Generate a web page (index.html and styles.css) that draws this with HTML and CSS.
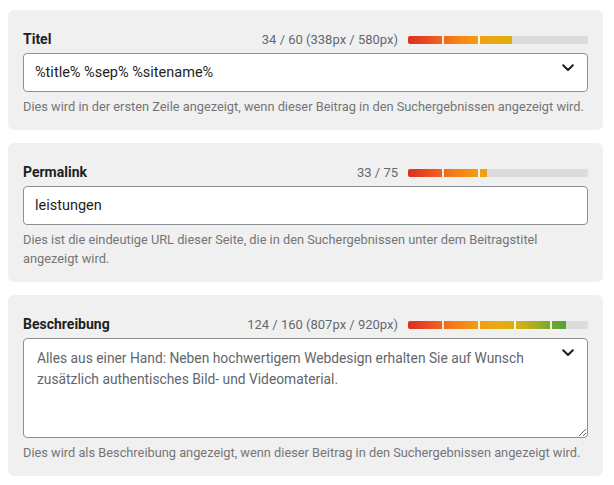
FILE: index.html
```html
<!DOCTYPE html>
<html lang="de">
<head>
<meta charset="utf-8">
<title>SEO Felder</title>
<link rel="stylesheet" href="styles.css">
</head>
<body>
<div class="page">
  <section class="panel">
    <div class="head">
      <span class="label">Titel</span>
      <span class="count">34 / 60 (338px / 580px)</span>
      <div class="bar"><div class="fill" style="width:104px"></div></div>
    </div>
    <div class="field">
      <div class="input">%title% %sep% %sitename%</div>
      <svg class="chev" width="12" height="8" viewBox="0 0 12 8"><path d="M1.2 1.2L6 6l4.8-4.8" fill="none" stroke="#1e1e1e" stroke-width="2" stroke-linecap="round" stroke-linejoin="round"/></svg>
    </div>
    <p class="help">Dies wird in der ersten Zeile angezeigt, wenn dieser Beitrag in den Suchergebnissen angezeigt wird.</p>
  </section>

  <section class="panel">
    <div class="head">
      <span class="label">Permalink</span>
      <span class="count">33 / 75</span>
      <div class="bar"><div class="fill" style="width:79px"></div></div>
    </div>
    <div class="field">
      <div class="input">leistungen</div>
    </div>
    <p class="help">Dies ist die eindeutige URL dieser Seite, die in den Suchergebnissen unter dem Beitragstitel angezeigt&nbsp;wird.</p>
  </section>

  <section class="panel">
    <div class="head">
      <span class="label">Beschreibung</span>
      <span class="count">124 / 160 (807px / 920px)</span>
      <div class="bar"><div class="fill" style="width:158px"></div></div>
    </div>
    <div class="field">
      <textarea class="area" readonly>Alles aus einer Hand: Neben hochwertigem Webdesign erhalten Sie auf Wunsch zusätzlich authentisches Bild- und Videomaterial.</textarea>
      <svg class="chev" width="12" height="8" viewBox="0 0 12 8"><path d="M1.2 1.2L6 6l4.8-4.8" fill="none" stroke="#1e1e1e" stroke-width="2" stroke-linecap="round" stroke-linejoin="round"/></svg>
    </div>
    <p class="help">Dies wird als Beschreibung angezeigt, wenn dieser Beitrag in den Suchergebnissen angezeigt wird.</p>
  </section>
</div>
</body>
</html>
```
FILE: styles.css
```css
html, body {
  margin: 0;
  background: #ffffff;
}

body {
  padding: 10px 11px 0 8px;
  font-family: Roboto, "Liberation Sans", sans-serif;
  color: #1e1e1e;
}

.page {
  display: flex;
  flex-direction: column;
  gap: 13px;
}

.panel {
  background: #f0f0f1;
  border-radius: 6px;
  padding: 19px 15px 14px;
}

.head {
  display: flex;
  align-items: center;
  height: 20px;
  margin-bottom: 4px;
}

.label {
  flex: 1;
  font-size: 14px;
  font-weight: 700;
  color: #1e1e1e;
}

.count {
  font-size: 13px;
  color: #646970;
  margin-right: 10px;
}

.bar {
  width: 180px;
  height: 8px;
  margin-top: 2px;
  background: #dcdcde;
  border-radius: 2px;
  overflow: hidden;
}

.fill {
  height: 100%;
  background:
    repeating-linear-gradient(90deg, transparent 0 34.5px, rgba(255, 255, 255, 0.9) 34.5px 36px),
    linear-gradient(90deg, #dc2f22 0%, #ee5a1f 16%, #f3791b 24%, #f49c12 38%, #e6ac10 52%, #d4b014 62%, #a8ae22 70%, #73a72e 80%, #4fa03a 88%, #3f9a3f 100%);
  background-size: 180px 100%, 180px 100%;
  background-repeat: no-repeat;
}

.field {
  position: relative;
}

.input {
  box-sizing: border-box;
  height: 39px;
  display: flex;
  align-items: center;
  padding: 0 11px;
  background: #ffffff;
  border: 1px solid #8c8f94;
  border-radius: 4px;
  font-size: 14.5px;
  color: #1e1e1e;
}

.area {
  display: block;
  box-sizing: border-box;
  width: 100%;
  height: 100px;
  margin: 0;
  padding: 9px 40px 9px 13px;
  background: #ffffff;
  border: 1px solid #8c8f94;
  border-radius: 4px;
  font-family: Roboto, "Liberation Sans", sans-serif;
  font-size: 13.8px;
  line-height: 21px;
  color: #62666b;
  resize: vertical;
  outline: none;
}

.chev {
  position: absolute;
  top: 11px;
  right: 14px;
}

.help {
  margin: 5px 0 0;
  font-size: 12.8px;
  line-height: 19px;
  color: #757575;
}
```
